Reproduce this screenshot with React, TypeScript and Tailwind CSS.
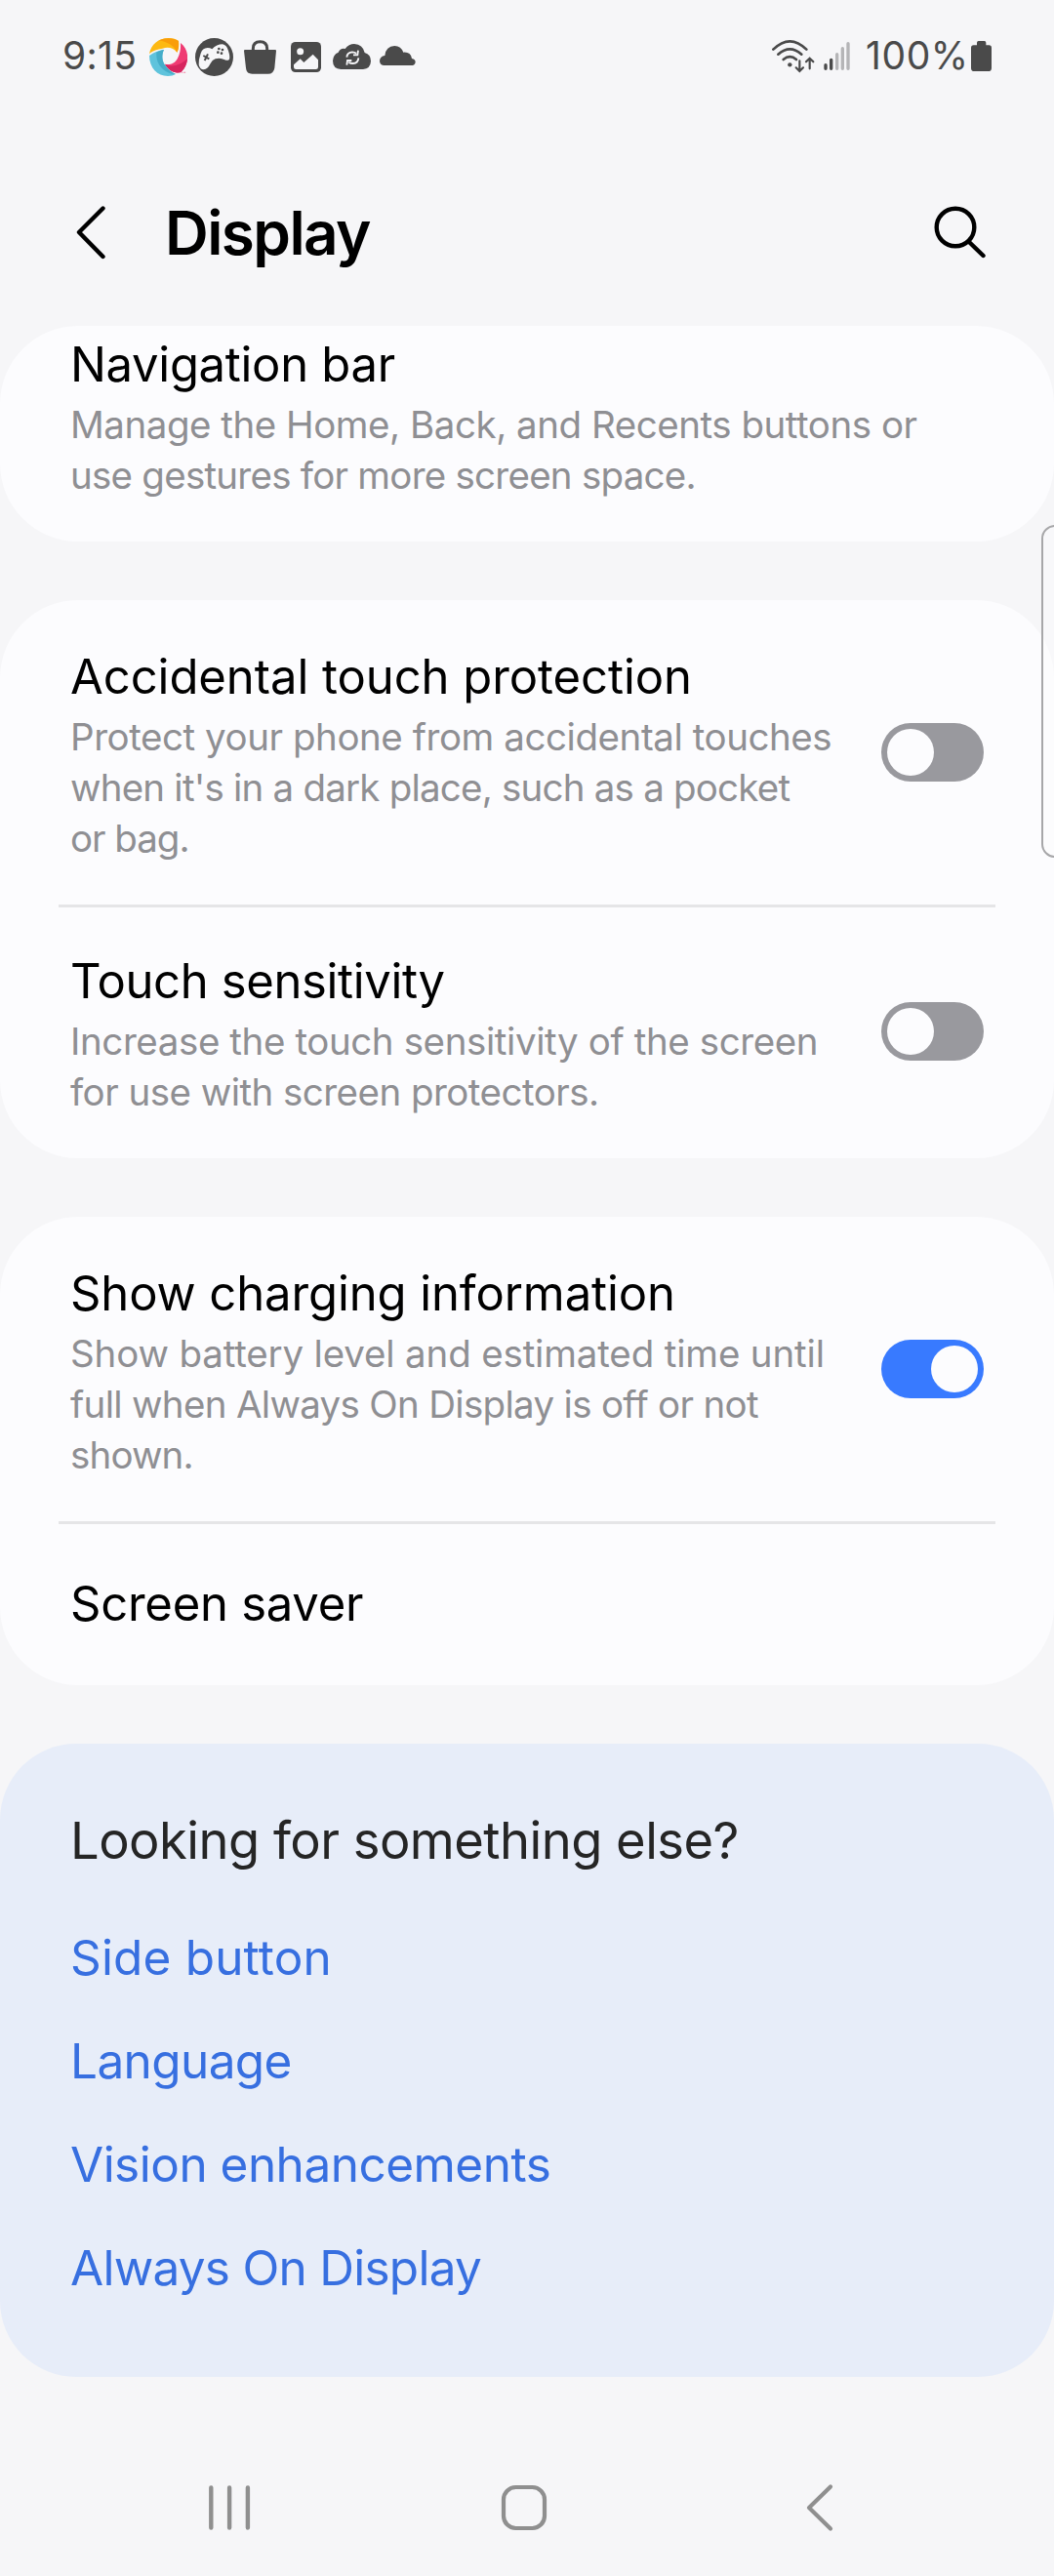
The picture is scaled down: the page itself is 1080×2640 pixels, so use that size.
import React from "react";

type Line = { text: string; className: string };

function StatusBar() {
  return (
    <div className="flex h-[115px] items-center pl-16 text-[39px] leading-none text-[#4a4a4a]">
      <span className="mb-[1.5px] w-[89px] tracking-[0.3px]">9:15</span>
      <svg className="h-10 w-[39px]" viewBox="309 51 117 120">
        <path d="M309 102C314 74 338 54 368 54C382 54 392 58 399 63C400 76 400 88 394 98C384 84 366 80 350 86C334 88 320 93 309 102Z" fill="#fdb913" />
        <path d="M338 61C360 51 384 53 399 63C400 76 400 88 394 98C386 78 366 66 338 61Z" fill="#f99d0b" />
        <path d="M405 69C420 80 428 98 426 118C424 138 415 152 405 160C388 162 368 156 357 134C372 138 388 132 396 116C404 102 406 86 405 69Z" fill="#ef3b73" />
        <path d="M426 118C424 138 415 152 405 160C388 162 368 156 357 134C378 146 404 138 426 118Z" fill="#d6255e" />
        <path d="M309 108C322 98 338 92 354 90C346 106 348 126 358 138C368 152 378 160 390 165C384 169 376 171 366 171C334 171 309 146 309 108Z" fill="#5fc3dc" />
        <path d="M354 90C346 106 348 126 358 138C368 152 378 160 390 165C362 164 328 142 331 98C338 94 346 91 354 90Z" fill="#45adc9" />
        <path d="M408 160h4M416 158v4M419 162v-4" stroke="#ef6a94" strokeWidth="2" />
      </svg>
      <svg className="ml-2 h-10 w-[39px]" viewBox="450 51 117 120">
        <circle cx="508.500" cy="112.500" r="58.500" fill="#4a4a4a" />
        <path d="M467 101Q472 85 488 84Q496 84 502 88Q516 73 534 73Q547 75 552 93Q558 112 555 119Q550 125 541 121Q527 113 512 118Q502 121 497 132Q489 149 476 151Q464 151 461 136Q460 120 467 101Z" fill="#f6f6f8" />
        <path d="M475 108L493 118M489 103L479 123" stroke="#4a4a4a" strokeWidth="6" />
        <g fill="#4a4a4a">
          <circle cx="523" cy="87" r="4" />
          <circle cx="534" cy="90" r="4" />
          <circle cx="520" cy="98" r="4" />
          <circle cx="531" cy="101" r="4" />
        </g>
      </svg>
      <svg className="ml-[11px] h-10 w-[33px]" viewBox="600 51 99 120">
        <path d="M603 90H696Q699 90 699 93L694 146Q691 164 674 164H625Q608 164 606 146L600 93Q600 90 603 90Z" fill="#4a4a4a" />
        <path d="M628 92V86Q628 65 649.500 65Q671 65 671 86V92" fill="none" stroke="#4a4a4a" strokeWidth="9" />
      </svg>
      <svg className="ml-[15px] h-10 w-[31px]" viewBox="174 51 93 120">
        <rect x="174" y="66" width="93" height="93" rx="14" fill="#4a4a4a" />
        <circle cx="203" cy="95" r="10.500" fill="#f6f6f8" />
        <path d="M183 136L203 118L214 129L242 104L258 121V143Q258 150 251 150H190Q183 150 183 143Z" fill="#f6f6f8" />
      </svg>
      <svg className="ml-3 h-10 w-[39px]" viewBox="303 51 117 120">
        <path d="M328 150Q303 149 303 124Q304 104 320 98Q326 84 341 87Q352 72 369 72Q395 73 401 99Q420 104 420 125Q419 148 396 150Z" fill="#4a4a4a" />
        <path d="M346 113Q347 98 363 97Q370 97 375 101M381 92L379 106L366 106M382 115Q381 131 365 132Q357 132 352 128M346 137L348 123L361 123" fill="none" stroke="#f6f6f8" strokeWidth="5.500" />
      </svg>
      <svg className="ml-[9px] h-10 w-[37px]" viewBox="447 51 111 120">
        <path d="M459 138Q447 136 447 124Q448 110 463 108Q466 79 493 78Q513 79 520 98Q542 96 546 117Q557 119 557 128Q556 137 547 138Z" fill="#4a4a4a" />
      </svg>
      <svg className="ml-[365px] h-10 w-11" viewBox="63 51 132 120" fill="none" stroke="#4a4a4a" strokeWidth="8" strokeLinecap="round">
        <path d="M67 89Q118 39 169 89" />
        <path d="M82 104Q118 72 154 104" />
        <path d="M98 120Q118 103 138 120" />
        <circle cx="118" cy="136" r="6.500" fill="#4a4a4a" stroke="none" />
        <path d="M148 124V154M137 145L148 156L159 145M179 148V118M168 127L179 116L190 127" strokeWidth="6.500" />
      </svg>
      <svg className="ml-2 h-10 w-[29px]" viewBox="219 51 87 120" strokeWidth="10" strokeLinecap="round">
        <path d="M228 137V148M245 121V148" stroke="#4a4a4a" />
        <path d="M263 104V148M280 86V148M297 71V148" stroke="#b5b5b7" />
      </svg>
      <span className="mb-[1.5px] ml-[15px] w-[107px] tracking-[0.6px]">100%</span>
      <svg className="h-10 w-6" viewBox="672 51 72 120">
        <path d="M693 76V68Q693 63 698 63H716Q721 63 721 68V76H730Q738 76 738 84V146Q738 156 728 156H685Q675 156 675 146V84Q675 76 683 76Z" fill="#4a4a4a" />
      </svg>
    </div>
  );
}

function Header() {
  return (
    <header className="flex h-[219px] items-start justify-between pl-[76px] pr-[69px] pt-[88px]">
      <div className="flex items-start">
        <svg className="mt-2 h-[56px] w-[33px]" viewBox="0 0 33 56" fill="none" stroke="#000" strokeWidth="4.400" strokeLinecap="round" strokeLinejoin="round">
          <path d="M29.500 2.500L5 27L29.500 52" />
        </svg>
        <h1 className="-mt-px ml-[60px] text-[62px] font-semibold leading-[74px] tracking-[-1.59px] text-black">Display</h1>
      </div>
      <svg className="mt-[7px] h-14 w-14" viewBox="0 0 56 56" fill="none" stroke="#000" strokeWidth="4.400" strokeLinecap="round">
        <circle cx="24" cy="23" r="19.300" />
        <path d="M38 38L52.500 52" />
      </svg>
    </header>
  );
}

function Toggle({ on = false }: { on?: boolean }) {
  return (
    <div
      className={
        on
          ? "-mt-1 flex h-[60px] w-[105px] shrink-0 items-center justify-end rounded-full bg-[#387aff] px-1.5"
          : "-mt-1 flex h-[60px] w-[105px] shrink-0 items-center rounded-full bg-[#99999e] px-1.5"
      }
    >
      <div className="size-12 rounded-full bg-[#fcfcfe]" />
    </div>
  );
}

function Setting({ title, lines, toggle, divided }: { title: Line; lines: Line[]; toggle?: "on" | "off"; divided?: boolean }) {
  return (
    <div className="relative flex items-center justify-between px-[72px] pb-[42px] pt-[46px]">
      {divided && <div className="absolute left-[60px] right-[60px] top-0 h-[3px] bg-[#e5e5e7]" />}
      <div className="whitespace-nowrap">
        <h2 className={"pt-px text-[49px] leading-[64px] text-black " + title.className}>{title.text}</h2>
        <div className="mt-[3px] text-[38.5px] leading-[52px] text-[#8f8f93]">
          {lines.map((l) => (
            <p key={l.text} className={l.className}>{l.text}</p>
          ))}
        </div>
      </div>
      {toggle && <Toggle on={toggle === "on"} />}
    </div>
  );
}

const links: Line[] = [
  { text: "Side button", className: "tracking-[0.17px]" },
  { text: "Language", className: "tracking-[-0.6px]" },
  { text: "Vision enhancements", className: "tracking-[-0.51px]" },
  { text: "Always On Display", className: "tracking-[-0.74px]" },
];

export default function App() {
  return (
    <div className="relative flex h-[2640px] w-[1080px] flex-col overflow-hidden bg-[#f6f6f8] font-['Inter',sans-serif]">
      <StatusBar />
      <Header />
      <main className="flex flex-col gap-[60px]">
        <section className="overflow-hidden rounded-[80px] bg-[#fcfcfe]">
          <div className="-mt-[39px]">
            <Setting
              title={{ text: "Navigation bar", className: "tracking-[-0.31px]" }}
              lines={[
                { text: "Manage the Home, Back, and Recents buttons or", className: "tracking-[-0.47px]" },
                { text: "use gestures for more screen space.", className: "tracking-[-0.75px]" },
              ]}
            />
          </div>
        </section>
        <section className="rounded-[80px] bg-[#fcfcfe]">
          <Setting
            title={{ text: "Accidental touch protection", className: "tracking-[-0.06px]" }}
            lines={[
              { text: "Protect your phone from accidental touches", className: "tracking-[-0.44px]" },
              { text: "when it's in a dark place, such as a pocket", className: "tracking-[-0.79px]" },
              { text: "or bag.", className: "tracking-[-1.03px]" },
            ]}
            toggle="off"
          />
          <Setting
            divided
            title={{ text: "Touch sensitivity", className: "tracking-[-0.36px]" }}
            lines={[
              { text: "Increase the touch sensitivity of the screen", className: "tracking-[-0.4px]" },
              { text: "for use with screen protectors.", className: "tracking-[-0.53px]" },
            ]}
            toggle="off"
          />
        </section>
        <section className="rounded-[80px] bg-[#fcfcfe]">
          <Setting
            title={{ text: "Show charging information", className: "tracking-[-0.1px]" }}
            lines={[
              { text: "Show battery level and estimated time until", className: "tracking-[-0.16px]" },
              { text: "full when Always On Display is off or not", className: "tracking-[-0.69px]" },
              { text: "shown.", className: "tracking-[-0.85px]" },
            ]}
            toggle="on"
          />
          <div className="relative flex h-[168px] items-center px-[72px]">
            <div className="absolute left-[60px] right-[60px] top-0 h-[3px] bg-[#e5e5e7]" />
            <h2 className="pt-0.5 text-[49px] leading-[64px] tracking-[-0.25px] text-black">Screen saver</h2>
          </div>
        </section>
        <section className="rounded-[78px] bg-[#e7edf9] px-[72px] pb-[59px] pt-[67px]">
          <h2 className="text-[52.5px] leading-[64px] tracking-[-0.53px] text-[#252525]">Looking for something else?</h2>
          <nav className="mt-[35px] flex flex-col text-[49.5px] leading-[106px] text-[#376fe0]">
            {links.map((l) => (
              <a key={l.text} className={l.className}>{l.text}</a>
            ))}
          </nav>
        </section>
      </main>
      <nav className="mt-[108px] flex h-[52px] items-center pl-[212px]">
        <svg className="h-[52px] w-[46px]" viewBox="0 0 46 52" stroke="#8f8f8f" strokeWidth="4.400" strokeLinecap="round">
          <path d="M4.300 5.500V46.500M23.100 5.500V46.500M41.900 5.500V46.500" />
        </svg>
        <svg className="ml-[253px] h-[52px] w-[52px]" viewBox="0 0 52 52" fill="none" stroke="#8f8f8f" strokeWidth="4.200">
          <rect x="5" y="5" width="42" height="42" rx="12.500" />
        </svg>
        <svg className="ml-[261px] h-[52px] w-8" viewBox="0 0 32 52" fill="none" stroke="#8f8f8f" strokeWidth="4.200" strokeLinecap="round" strokeLinejoin="round">
          <path d="M27 4.500L5 26L27 47.500" />
        </svg>
      </nav>
      <div className="absolute -right-[22px] top-[538px] h-[341px] w-[35px] rounded-[14px] border-[2.500px] border-[#a7a7a9] bg-[#fcfcfc]/40" />
    </div>
  );
}
